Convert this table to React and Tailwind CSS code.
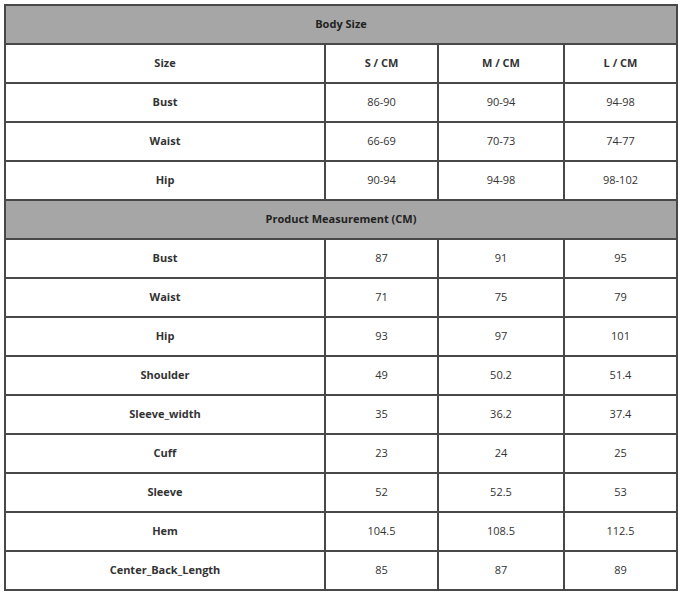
import React from "react";

// Size chart: two gray section headers with a 4-column grid of measurements.
const bodyRows = [
  ["Bust", "86-90", "90-94", "94-98"],
  ["Waist", "66-69", "70-73", "74-77"],
  ["Hip", "90-94", "94-98", "98-102"],
];

const productRows = [
  ["Bust", "87", "91", "95"],
  ["Waist", "71", "75", "79"],
  ["Hip", "93", "97", "101"],
  ["Shoulder", "49", "50.2", "51.4"],
  ["Sleeve_width", "35", "36.2", "37.4"],
  ["Cuff", "23", "24", "25"],
  ["Sleeve", "52", "52.5", "53"],
  ["Hem", "104.5", "108.5", "112.5"],
  ["Center_Back_Length", "85", "87", "89"],
];

const Cell = ({ children, bold }) => (
  <div
    className={`h-[37px] bg-white flex items-center justify-center text-[11px] text-[#333] ${
      bold ? "font-bold text-[#222]" : ""
    }`}
  >
    {children}
  </div>
);

const SectionHeader = ({ title }) => (
  <div className="col-span-4 h-[37px] bg-[#a6a6a6] flex items-center justify-center text-[11px] font-bold text-[#222]">
    {title}
  </div>
);

const DataRow = ({ row }) => (
  <>
    <Cell bold>{row[0]}</Cell>
    <Cell>{row[1]}</Cell>
    <Cell>{row[2]}</Cell>
    <Cell>{row[3]}</Cell>
  </>
);

export default function App() {
  return (
    <div
      className="w-[680px] h-[592px] bg-white pt-[4px] pl-[4px] overflow-hidden"
      style={{ fontFamily: '"Open Sans", "Noto Sans", sans-serif' }}
    >
      <div className="w-[674px] grid grid-cols-[318px_111px_124px_111px] gap-[2px] p-[2px] bg-[#484848]">
        <SectionHeader title="Body Size" />
        <Cell bold>Size</Cell>
        <Cell bold>S / CM</Cell>
        <Cell bold>M / CM</Cell>
        <Cell bold>L / CM</Cell>
        {bodyRows.map((row) => (
          <DataRow key={"b" + row[0]} row={row} />
        ))}
        <SectionHeader title="Product Measurement (CM)" />
        {productRows.map((row) => (
          <DataRow key={"p" + row[0]} row={row} />
        ))}
      </div>
    </div>
  );
}
